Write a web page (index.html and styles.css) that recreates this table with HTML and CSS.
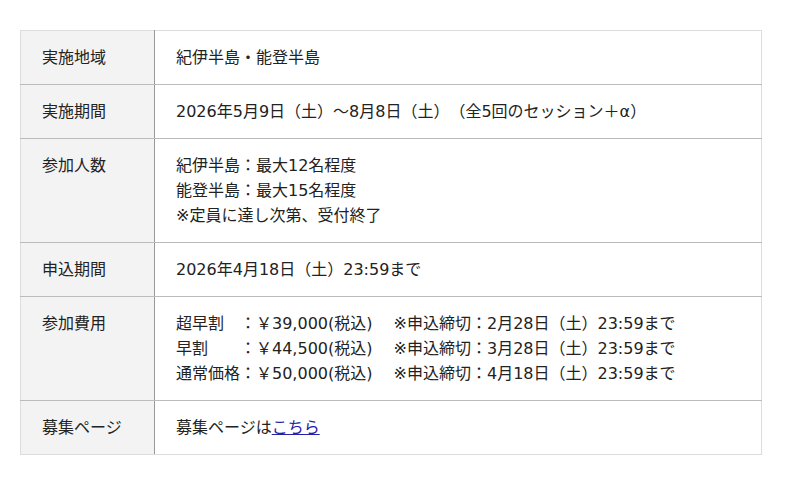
FILE: index.html
```html
<!DOCTYPE html>
<html lang="ja">
<head>
<meta charset="utf-8">
<link rel="stylesheet" href="styles.css">
</head>
<body>
<div class="wrap">
<table class="info">
  <tr><th>実施地域</th><td>紀伊半島・能登半島</td></tr>
  <tr><th>実施期間</th><td>2026年5月9日（土）～8月8日（土）（全5回のセッション＋α）</td></tr>
  <tr><th>参加人数</th><td>紀伊半島：最大12名程度<br>能登半島：最大15名程度<br>※定員に達し次第、受付終了</td></tr>
  <tr><th>申込期間</th><td>2026年4月18日（土）23:59まで</td></tr>
  <tr><th>参加費用</th><td>超早割　：￥39,000(税込)　&nbsp;※申込締切：2月28日（土）23:59まで<br>早割　　：￥44,500(税込)　&nbsp;※申込締切：3月28日（土）23:59まで<br>通常価格：￥50,000(税込)　&nbsp;※申込締切：4月18日（土）23:59まで</td></tr>
  <tr><th>募集ページ</th><td>募集ページは<a href="#">こちら</a></td></tr>
</table>
</div>
</body>
</html>
```
FILE: styles.css
```css
html, body { margin: 0; padding: 0; background: #fff; }
body {
  font-family: "DejaVu Sans", "Noto Sans CJK JP", sans-serif;
  font-size: 16px;
  color: #222;
  text-spacing-trim: space-all;
}
.wrap { padding: 30px 20px 0 20px; }
.info {
  width: 742px;
  border-collapse: collapse;
  border: 1px solid #ddd;
}
.info th, .info td {
  border-bottom: 1px solid #bbb;
  padding: 14px 21px 14px 21px;
  line-height: 25px;
  text-align: left;
  vertical-align: top;
  font-weight: normal;
}
.info th {
  width: 91px;
  background: #f3f3f3;
  border-right: 1px solid #999;
  color: #222;
}
.info tr:last-child th, .info tr:last-child td { border-bottom: 1px solid #ddd; }
.info a { color: #2323a8; text-decoration: underline; }
```
